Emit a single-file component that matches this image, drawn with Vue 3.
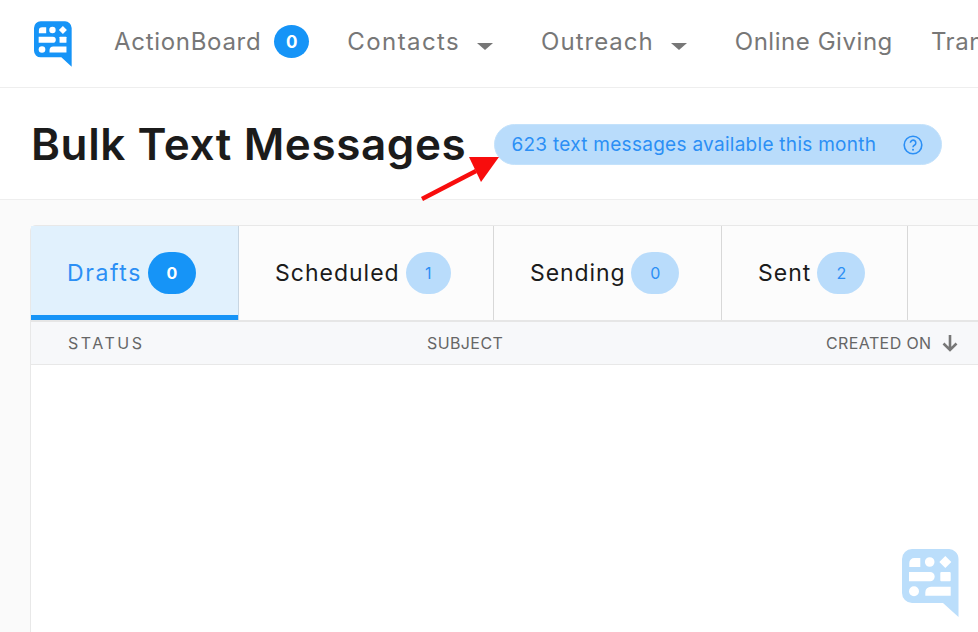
<script setup>
const navItems = [
  { label: 'ActionBoard', spacing: 0.7, badge: '0' },
  { label: 'Contacts', spacing: 1.4, caret: true },
  { label: 'Outreach', spacing: 1, caret: true },
  { label: 'Online Giving', spacing: 0.55 },
  { label: 'Transactions', spacing: 0.55 },
]
const tabs = [
  { label: 'Drafts', count: 0, width: 208, spacing: 1.6, active: true },
  { label: 'Scheduled', count: 1, width: 255, spacing: 1, narrow: true },
  { label: 'Sending', count: 0, width: 228, spacing: 0.9 },
  { label: 'Sent', count: 2, width: 186, spacing: 1 },
]
const bubble = 'M10 0H46A10 10 0 0 1 56.5 10V68L41 54H10A10 10 0 0 1 0 44V10A10 10 0 0 1 10 0Z'
const cuts = [
  'M7.3 18V14A5 5 0 0 1 12.3 9H18.3V18Z',
  'M27.7 8.2A4.8 4.8 0 1 1 27.7 17.8A4.8 4.8 0 1 1 27.7 8.2Z',
  'M43.3 7L49.3 13L43.3 19L37.3 13Z',
  'M7 23H28A4.6 4.6 0 0 1 32.7 27.6A4.6 4.6 0 0 1 28 32.3H7Z',
  'M39.3 23H47.7A1 1 0 0 1 48.7 24V31.3A1 1 0 0 1 47.7 32.3H39.3A1 1 0 0 1 38.3 31.3V24A1 1 0 0 1 39.3 23Z',
  'M12 37.3A5 5 0 1 1 12 47.3A5 5 0 1 1 12 37.3Z',
  'M29 37.7H48.7V46.7H23.3V43.4A5.7 5.7 0 0 1 29 37.7Z',
]
</script>

<template>
  <div class="page">
    <header class="topbar">
      <svg class="logo" viewBox="0 0 57 68" aria-hidden="true">
        <path class="bubble" :d="bubble" />
        <path v-for="d in cuts" :key="d" class="cut" :d="d" />
      </svg>
      <nav class="nav">
        <a
          v-for="item in navItems"
          :key="item.label"
          class="nav-item"
          :style="{ letterSpacing: item.spacing + 'px' }"
        >
          {{ item.label }}
          <span v-if="item.badge" class="nav-badge">{{ item.badge }}</span>
          <i v-if="item.caret" class="caret"></i>
        </a>
      </nav>
    </header>

    <section class="title-bar">
      <h1>Bulk Text Messages</h1>
      <div class="pill">
        <span>623 text messages available this month</span>
        <svg class="help" viewBox="0 0 20 20" aria-hidden="true">
          <circle cx="10" cy="10" r="8.8" />
          <path d="M7.4 7.7A2.7 2.7 0 1 1 11.4 10.2C10.5 10.8 10 11.2 10 12.3" />
          <circle class="dot" cx="10" cy="14.8" r="1" />
        </svg>
      </div>
      <svg class="arrow" viewBox="0 0 90 50" aria-hidden="true">
        <path d="M2 44L56 16" />
        <polygon points="79,2 49,2 61,27" />
      </svg>
    </section>

    <main class="content">
      <div class="card">
        <div class="tabs">
          <div
            v-for="tab in tabs"
            :key="tab.label"
            class="tab"
            :class="{ active: tab.active }"
            :style="{ width: tab.width + 'px' }"
          >
            <span :style="{ letterSpacing: tab.spacing + 'px' }">{{ tab.label }}</span>
            <span class="count" :class="{ narrow: tab.narrow }">{{ tab.count }}</span>
          </div>
        </div>
        <div class="thead">
          <span class="col-status">STATUS</span>
          <span class="col-subject">SUBJECT</span>
          <span class="col-created">CREATED ON
            <svg viewBox="0 0 16 18" aria-hidden="true"><path d="M8 1V16M1.5 9.5L8 16L14.5 9.5" /></svg>
          </span>
        </div>
      </div>
    </main>

    <svg class="watermark" viewBox="0 0 57 68" aria-hidden="true">
      <path class="bubble" :d="bubble" />
      <path v-for="d in cuts" :key="d" class="cut" :d="d" />
    </svg>
  </div>
</template>

<style>
html, body { margin: 0; overflow: hidden; background: #fff; }
</style>

<style scoped>
.page {
  position: relative;
  width: 978px;
  height: 632px;
  overflow: hidden;
  font-family: Inter, "Liberation Sans", sans-serif;
  background: #fafafa;
}
.topbar {
  display: flex;
  align-items: center;
  height: 87px;
  padding-left: 34px;
  background: #fff;
  border-bottom: 1px solid #eee;
  white-space: nowrap;
}
.logo { width: 38px; height: 46px; flex: none; }
.bubble { fill: #1694f7; }
.cut { fill: #fff; }
.nav { display: flex; align-items: center; margin: 0 0 4px 42px; gap: 38px; }
.nav-item { display: flex; align-items: center; color: #777; font-size: 24px; }
.nav-item:nth-child(n + 3) { margin-left: 10px; }
.nav-item:last-child { margin-left: 0; }
.nav-badge {
  display: flex; align-items: center; justify-content: center;
  width: 35px; height: 33px; margin-left: 13px;
  border-radius: 50%;
  background: #1694f7; color: #fff;
  font-size: 17px; font-weight: 700; letter-spacing: 0;
}
.caret {
  width: 0; height: 0; margin: 10px 0 0 17px;
  border: 8px solid transparent;
  border-top: 7px solid #777;
  border-bottom: 0;
}
.title-bar {
  position: relative;
  display: flex;
  align-items: center;
  height: 111px;
  padding-left: 31px;
  background: #fff;
  border-bottom: 1px solid #eee;
}
h1 { margin: 0; color: #1b1b1b; font-size: 44px; font-weight: 600; letter-spacing: 0.6px; white-space: nowrap; }
.pill {
  display: flex; align-items: center; justify-content: space-between;
  width: 448px; height: 41px; margin: 2px 0 0 28px; padding: 0 18px 0 16px;
  box-sizing: border-box;
  border: 1px solid #c4e2fb;
  border-radius: 21px;
  background: #b9dcfb;
  color: #2b8ff5;
  font-size: 19px;
  letter-spacing: 0.28px;
  white-space: nowrap;
}
.help { width: 20px; height: 20px; fill: none; stroke: #2b8ff5; stroke-width: 1.6; }
.help .dot { fill: #2b8ff5; stroke: none; }
.arrow { position: absolute; left: 420px; top: 67px; width: 90px; height: 50px; }
.arrow path { stroke: #f80d0d; stroke-width: 4.5; fill: none; }
.arrow polygon { fill: #f80d0d; }
.content { padding: 25px 0 0 30px; }
.card {
  width: 1100px;
  min-height: 420px;
  background: #fff;
  border: 1px solid #e8e8e8;
  border-top-left-radius: 6px;
}
.tabs {
  display: flex;
  height: 94px;
  background: #fcfcfc;
  border-bottom: 2px solid #e6e6e6;
}
.tab {
  display: flex; align-items: center;
  box-sizing: border-box;
  height: 94px;
  padding-left: 36px;
  border-right: 1px solid #d8d8d8;
  color: #1b1b1b;
  font-size: 23px;
}
.tab.active {
  background: #e1f1fd;
  color: #2b8ff5;
  box-shadow: inset 0 -5px 0 #1694f7;
  border-right-color: #c8d6e2;
}
.count {
  display: flex; align-items: center; justify-content: center;
  width: 48px; height: 42px; margin-left: 6px;
  border-radius: 21px;
  background: #b9dcfb;
  color: #2b8ff5;
  font-size: 16px;
}
.count.narrow { width: 45px; }
.active .count { background: #1694f7; color: #fff; font-weight: 700; }
.thead {
  display: flex; align-items: center;
  height: 42px;
  background: #f7f8fa;
  border-bottom: 1px solid #e8e8e8;
  color: #666;
  font-size: 16px;
  letter-spacing: 0.4px;
  white-space: nowrap;
}
.col-status { margin-left: 37px; width: 359px; letter-spacing: 2.5px; }
.col-subject { width: 399px; }
.col-created { display: flex; align-items: center; gap: 10px; }
.col-created svg { width: 16px; height: 18px; fill: none; stroke: #777; stroke-width: 2.6; }
.watermark { position: absolute; left: 902px; top: 549px; width: 57px; height: 68px; }
.watermark .bubble { fill: #bbdefb; }
</style>
